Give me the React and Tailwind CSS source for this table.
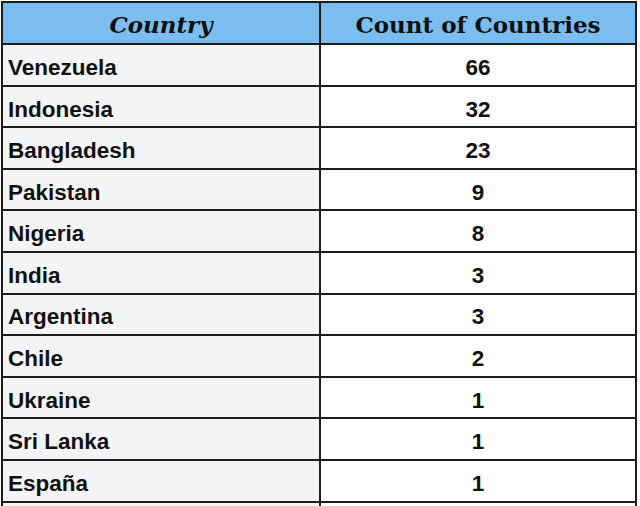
const rows = [
  ["Venezuela", 66],
  ["Indonesia", 32],
  ["Bangladesh", 23],
  ["Pakistan", 9],
  ["Nigeria", 8],
  ["India", 3],
  ["Argentina", 3],
  ["Chile", 2],
  ["Ukraine", 1],
  ["Sri Lanka", 1],
  ["España", 1],
];

export default function App() {
  return (
    <div className="w-[640px] h-[506px] overflow-hidden bg-white">
      <div className="ml-px mt-px w-[636px] border-2 border-[#1c1c1c]">
        <div className="flex h-[42px] border-b-2 border-[#1c1c1c] bg-[#7bbdee] font-['DejaVu_Serif',serif] font-bold text-[23px] text-[#111]">
          <div className="w-[318px] border-r-2 border-[#1c1c1c] flex items-center justify-center italic pt-[4px]">
            Country
          </div>
          <div className="flex-1 flex items-center justify-center pt-[4px]">
            Count of Countries
          </div>
        </div>
        {rows.map(([name, count]) => (
          <div
            key={name}
            className="flex h-[41.6px] border-b-2 border-[#1c1c1c] font-['Liberation_Sans',Arial,sans-serif] font-bold text-[22.5px] text-[#111]"
          >
            <div className="w-[318px] border-r-2 border-[#1c1c1c] bg-[#f3f4f6] flex items-center pl-[5px] pt-[6px]">
              {name}
            </div>
            <div className="flex-1 flex items-center justify-center pt-[6px]">
              {count}
            </div>
          </div>
        ))}
        <div className="flex h-[41.6px]">
          <div className="w-[318px] border-r-2 border-[#1c1c1c] bg-[#f3f4f6]" />
          <div className="flex-1" />
        </div>
      </div>
    </div>
  );
}
